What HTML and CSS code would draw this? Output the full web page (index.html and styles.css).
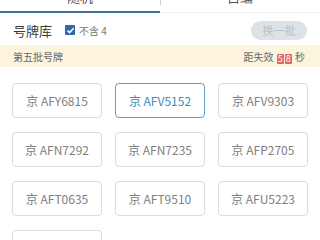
FILE: index.html
```html
<!DOCTYPE html>
<html lang="zh-CN">
<head>
<meta charset="utf-8">
<link rel="stylesheet" href="styles.css">
</head>
<body>
<div class="page">
  <div class="tabs">
    <div class="tab active"><span>随机</span></div>
    <div class="tab"><span>自编</span></div>
  </div>
  <div class="toolbar">
    <span class="title">号牌库</span>
    <label class="check">
      <span class="box"><svg width="9" height="9" viewBox="0 0 9 9"><path d="M1.5 4.6 L3.6 6.6 L7.6 2.2" fill="none" stroke="#fff" stroke-width="1.5"/></svg></span>
      <span class="check-text">不含 4</span>
    </label>
    <span class="btn">换一批</span>
  </div>
  <div class="notice">
    <span>第五批号牌</span>
    <span class="timer">距失效 <b>5</b><b>8</b> 秒</span>
  </div>
  <div class="grid">
    <div class="plate">京 AFY6815</div>
    <div class="plate sel">京 AFV5152</div>
    <div class="plate">京 AFV9303</div>
    <div class="plate">京 AFN7292</div>
    <div class="plate">京 AFN7235</div>
    <div class="plate">京 AFP2705</div>
    <div class="plate">京 AFT0635</div>
    <div class="plate">京 AFT9510</div>
    <div class="plate">京 AFU5223</div>
    <div class="plate"></div>
  </div>
</div>
</body>
</html>
```
FILE: styles.css
```css
* { box-sizing: border-box; margin: 0; padding: 0; }
html, body { width: 320px; height: 240px; overflow: hidden; background: #fff; }
body { font-family: "Noto Sans CJK SC", "Noto Sans", sans-serif; color: #333; }
.page { width: 320px; }
.tabs { display: flex; height: 20px; margin-top: -7px; }
.tab { flex: 1; display: flex; justify-content: center; align-items: flex-start; border-bottom: 1px solid #eceff1; position: relative; }
.tab span { font-size: 13px; line-height: 13px; color: #555; margin-top: -3px; }
.tab.active { border-bottom: 2px solid #3e6d9c; }
.tab + .tab::before { content: ""; position: absolute; left: 0; top: 0; width: 1px; height: 12px; background: #ccc; }
.toolbar { display: flex; align-items: center; height: 32px; padding: 2px 13px 0 13px; }
.title { font-size: 13px; color: #3a3a3a; }
.check { display: flex; align-items: center; margin-left: 13px; }
.box { width: 10px; height: 10px; background: #2f69ad; border-radius: 1px; display: flex; align-items: center; justify-content: center; }
.check-text { font-size: 10px; color: #777; margin-left: 4px; }
.btn { margin-left: auto; width: 56px; height: 19px; border-radius: 10px; background: #dde2e6; color: #b9c0c6; font-size: 11px; display: flex; align-items: center; justify-content: center; }
.notice { display: flex; align-items: center; justify-content: space-between; height: 22px; background: #fdf4dd; padding: 0 15px 0 13px; font-size: 10px; color: #666; }
.timer b { display: inline-block; width: 7px; height: 10px; line-height: 10px; background: #e16767; color: #fff; font-weight: normal; font-size: 9px; text-align: center; margin-right: 1px; border-radius: 1px; vertical-align: -1px; }
.timer b:first-of-type { margin-left: 1px; }
.grid { display: grid; grid-template-columns: repeat(3, 90px); column-gap: 13px; row-gap: 14px; padding: 16px 13px 0 12px; }
.plate { height: 35px; border: 1px solid #dcdcdc; border-radius: 4px; display: flex; align-items: center; justify-content: center; font-size: 12px; color: #808080; }
.plate.sel { border-color: #5fa0c6; color: #3d8dbc; }
```
